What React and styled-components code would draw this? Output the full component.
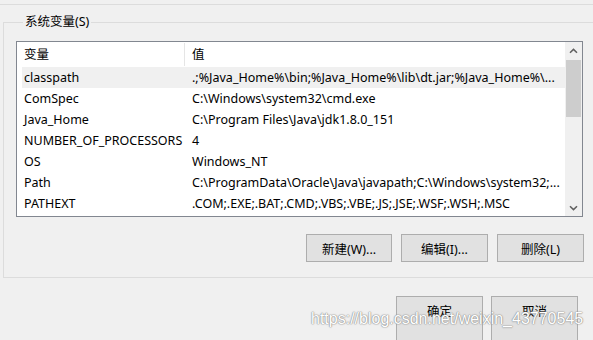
import React from 'react';
import styled, { createGlobalStyle } from 'styled-components';

const GlobalStyle = createGlobalStyle`
  html, body {
    margin: 0;
    padding: 0;
    background: #f0f0f0;
    overflow: hidden;
    height: 340px;
  }
  body {
    font-family: 'Noto Sans', 'Noto Sans CJK SC', sans-serif;
    font-size: 12.5px;
    color: #000;
  }
`;

const Page = styled.div`
  position: relative;
  width: 593px;
  height: 340px;
  overflow: hidden;
`;

// 위쪽 그룹 상자의 아래 테두리
const TopEdge = styled.div`
  height: 4px;
  border-bottom: 1px solid #dcdcdc;
`;

const GroupBox = styled.fieldset`
  margin: 9px -20px 0 3px;
  padding: 0 0 15px 12px;
  border: 1px solid #dcdcdc;
  min-width: 0;
`;

const GroupTitle = styled.legend`
  margin-left: 7px;
  padding: 0 2px;
  line-height: 16px;
  font-size: 12.5px;
`;

const ListBox = styled.div`
  margin-top: 11px;
  width: 565px;
  height: 174px;
  border: 1px solid #828790;
  background: #fff;
  display: flex;
`;

const ListBody = styled.div`
  flex: 1;
  min-width: 0;
  display: flex;
  flex-direction: column;
`;

const Row = styled.div`
  display: grid;
  grid-template-columns: 163px 1fr;
  margin-left: 5px;
  height: ${(p) => (p.$header ? '25px' : '21px')};
  background: ${(p) => (p.$selected ? '#f0f0f0' : 'transparent')};
`;

const Cell = styled.div`
  display: flex;
  align-items: center;
  padding-left: ${(p) => (p.$first ? '2px' : '7px')};
  white-space: nowrap;
  overflow: hidden;
  line-height: 16px;
  border-right: ${(p) => (p.$divider ? '1px solid #e5e5e5' : 'none')};
  margin: ${(p) => (p.$divider ? '1px 0' : '0')};
`;

const ScrollBar = styled.div`
  width: 17px;
  background: #f0f0f0;
  display: flex;
  flex-direction: column;
  align-items: center;
`;

const ArrowButton = styled.div`
  width: 17px;
  height: 17px;
  display: flex;
  align-items: center;
  justify-content: center;
  margin-top: ${(p) => (p.$down ? 'auto' : '0')};
`;

const Thumb = styled.div`
  width: 15px;
  height: 57px;
  margin-top: 1px;
  background: #cdcdcd;
`;

const ButtonRow = styled.div`
  display: flex;
  justify-content: flex-end;
  gap: 9px;
  margin-top: 17px;
  padding-right: 28px;
`;

const Button = styled.button`
  width: ${(p) => p.$w || 87}px;
  height: ${(p) => p.$h || 28}px;
  padding: 0 0 ${(p) => (p.$h ? p.$h - 28 : 0)}px;
  background: #e1e1e1;
  border: 1px solid #adadad;
  font-family: 'Noto Sans', 'Noto Sans CJK SC', sans-serif;
  font-size: 12.5px;
  color: #000;
`;

const FooterRow = styled.div`
  display: flex;
  justify-content: flex-end;
  gap: 8px;
  margin-top: 18px;
  padding-right: 15px;
`;

// 워터마크
const Watermark = styled.div`
  position: absolute;
  left: 311px;
  top: 310px;
  font-family: 'Liberation Sans', Arial, sans-serif;
  font-size: 16px;
  color: #fff;
  text-shadow: 0 0 1px #8a8a8a, 0 0 1px #8a8a8a, 0 0 2px #aaa;
  white-space: nowrap;
`;

const Chevron = ({ down }) => (
  <svg width="9" height="6" viewBox="0 0 9 6">
    <path
      d={down ? 'M1 1.2 L4.5 4.6 L8 1.2' : 'M1 4.8 L4.5 1.4 L8 4.8'}
      fill="none"
      stroke="#606060"
      strokeWidth="1.5"
    />
  </svg>
);

const vars = [
  ['classpath', '.;%Java_Home%\\bin;%Java_Home%\\lib\\dt.jar;%Java_Home%\\...'],
  ['ComSpec', 'C:\\Windows\\system32\\cmd.exe'],
  ['Java_Home', 'C:\\Program Files\\Java\\jdk1.8.0_151'],
  ['NUMBER_OF_PROCESSORS', '4'],
  ['OS', 'Windows_NT'],
  ['Path', 'C:\\ProgramData\\Oracle\\Java\\javapath;C:\\Windows\\system32;...'],
  ['PATHEXT', '.COM;.EXE;.BAT;.CMD;.VBS;.VBE;.JS;.JSE;.WSF;.WSH;.MSC'],
];

const App = () => {
  return (
    <Page>
      <GlobalStyle />
      <TopEdge />
      <GroupBox>
        <GroupTitle>系统变量(S)</GroupTitle>
        <ListBox>
          <ListBody>
            <Row $header>
              <Cell $first $divider>变量</Cell>
              <Cell>值</Cell>
            </Row>
            {vars.map(([name, value], i) => (
              <Row key={name} $selected={i === 0}>
                <Cell $first>{name}</Cell>
                <Cell>{value}</Cell>
              </Row>
            ))}
          </ListBody>
          <ScrollBar>
            <ArrowButton>
              <Chevron />
            </ArrowButton>
            <Thumb />
            <ArrowButton $down>
              <Chevron down />
            </ArrowButton>
          </ScrollBar>
        </ListBox>
        <ButtonRow>
          <Button $w={86}>新建(W)...</Button>
          <Button>编辑(I)...</Button>
          <Button>删除(L)</Button>
        </ButtonRow>
      </GroupBox>
      <FooterRow>
        <Button $h={48}>确定</Button>
        <Button $h={48}>取消</Button>
      </FooterRow>
      <Watermark>https://blog.csdn.net/weixin_43770545</Watermark>
    </Page>
  );
};

export default App;
